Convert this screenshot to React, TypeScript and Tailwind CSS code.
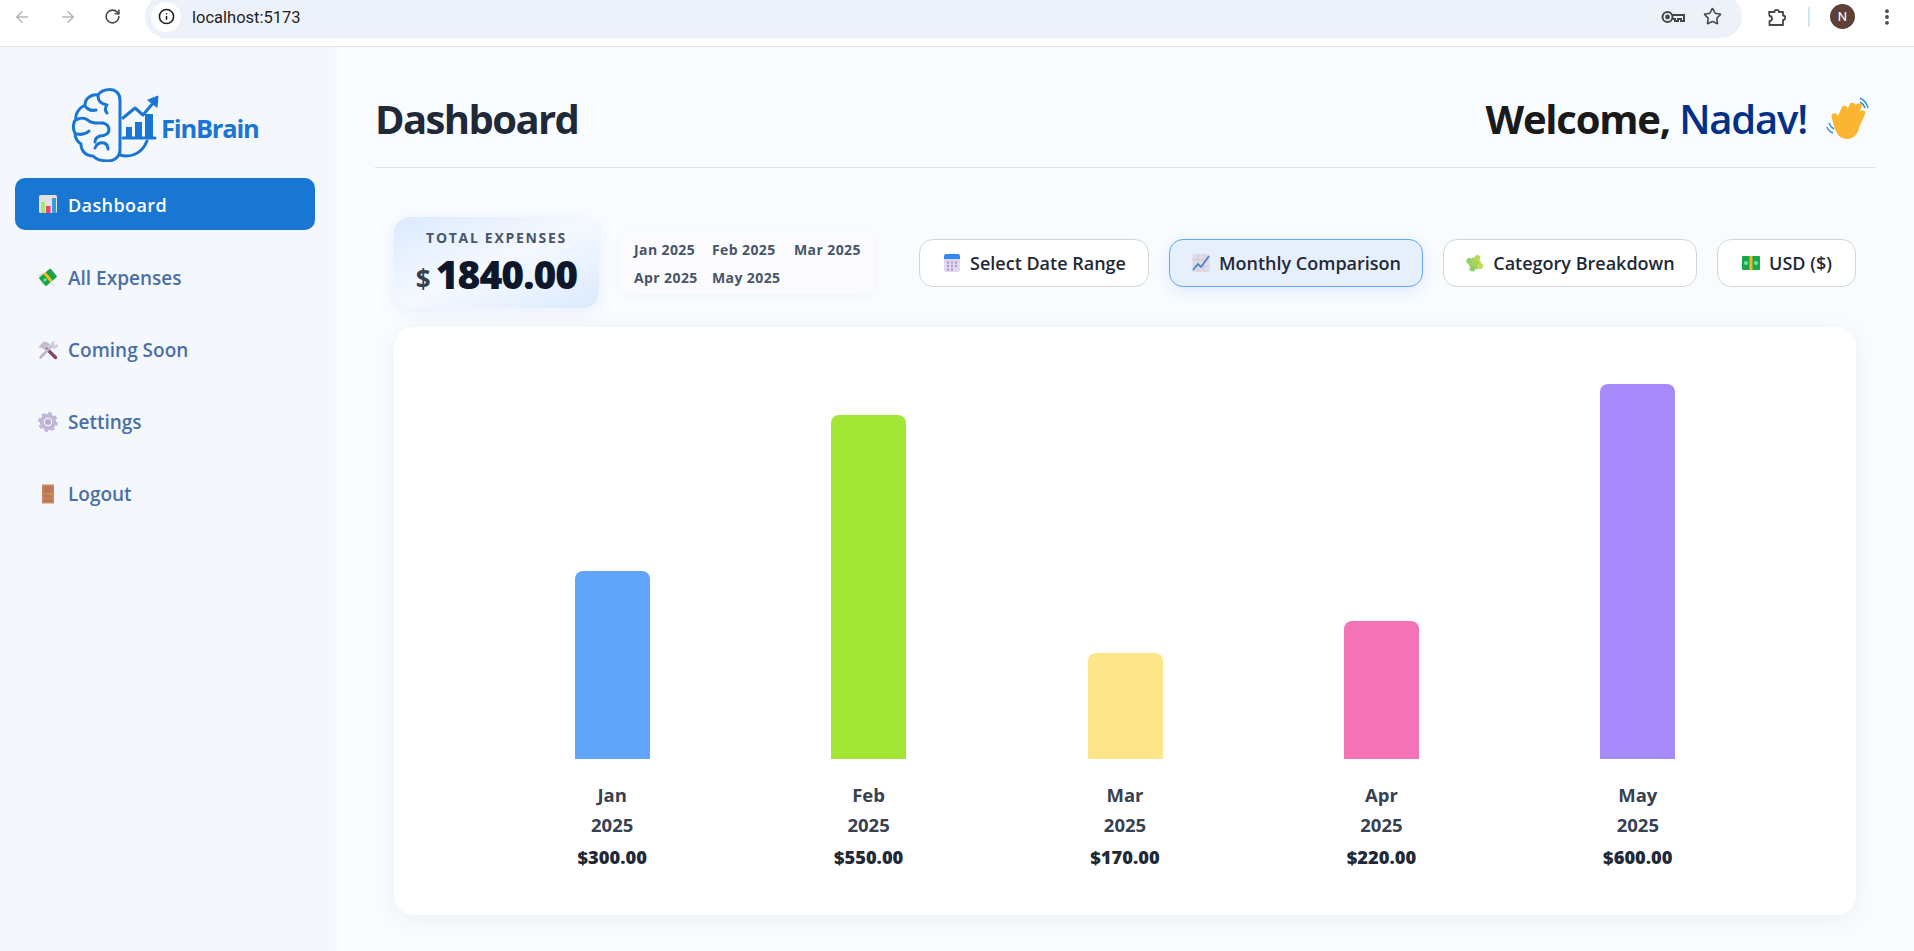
import type { ReactNode } from 'react';
import { ArrowLeft, ArrowRight, RotateCw, Star, EllipsisVertical, Info } from 'lucide-react';

const font = "font-['Open_Sans','Noto_Sans',sans-serif]";

function BrowserBar() {
  return (
    <div className="h-[47px] bg-white border-b border-[#e2e4e7] shrink-0 overflow-hidden font-['Roboto',sans-serif]">
      <div className="h-[33px] flex items-center pl-[13px]">
        <ArrowLeft className="w-[18px] h-[18px] text-[#b4b6b9]" strokeWidth={2} />
        <ArrowRight className="w-[18px] h-[18px] text-[#b4b6b9] ml-[28px]" strokeWidth={2} />
        <RotateCw className="w-[17px] h-[17px] text-[#474747] ml-[27px]" strokeWidth={2.2} />
        <div className="ml-[24px] w-[1597px] h-[43px] shrink-0 rounded-[21px] bg-[#edf2fa] flex items-center pl-[6px]">
          <div className="w-[30px] h-[30px] rounded-full bg-white flex items-center justify-center">
            <Info className="w-[17px] h-[17px] text-[#1f1f1f]" strokeWidth={2.2} />
          </div>
          <span className="ml-[11px] mt-[3px] text-[16.5px] text-[#1f1f1f]">localhost:5173</span>
          <svg width="24" height="14" viewBox="0 0 24 14" fill="none" stroke="#474747" strokeWidth="2" className="ml-auto">
            <circle cx="6.5" cy="7" r="5" />
            <circle cx="6.5" cy="7" r="1.4" fill="#474747" />
            <path d="M11.5 5H23v6h-3V9h-3v2h-3V9h-2.5" />
          </svg>
          <Star className="ml-[18px] mr-[20px] w-[19px] h-[19px] text-[#474747]" strokeWidth={2} />
        </div>
        <svg width="20" height="20" viewBox="0 0 20 20" fill="none" stroke="#474747" strokeWidth="1.8" strokeLinejoin="round" className="ml-[25px] shrink-0">
          <path d="M2 5h5.5a2.2 2.2 0 0 1 4.4 0H16v3.5a2.2 2.2 0 0 1 0 4.4V18H2.5v-4a2.5 2.5 0 0 0 0-5z" />
        </svg>
        <div className="ml-[21px] w-[2px] h-[20px] bg-[#d3e3fd] shrink-0" />
        <div className="ml-[20px] w-[25px] h-[25px] shrink-0 rounded-full bg-[#5d4037] text-white text-[13px] flex items-center justify-center">N</div>
        <EllipsisVertical className="ml-[22px] w-[20px] h-[20px] text-[#474747] shrink-0" strokeWidth={2.6} />
      </div>
    </div>
  );
}

function Logo() {
  return (
    <div className="flex items-start h-[74px] pl-[57px]">
      <svg width="90" height="74" viewBox="0 0 90 74" fill="none" stroke="#1976d2" strokeWidth="3" strokeLinecap="round" strokeLinejoin="round" className="shrink-0">
        <path d="M48 12C48 5 43 1.5 38 1.5C32 1.5 28 4 26 7C20 6 13 10 13 17C7 20 3 26 4 31C1 34 .5 41 3 45C3 50 6 54 9 56C9 63 14 68 21 68C24 71 30 73 36 73C43 73 48 68 48 62Z" />
        <path d="M26 8c0 5 4 8 9 9M35 17c-2 3-2 6 0 8M13 18c3 4 7 5 11 4M4 32c5-3 10-2 13 1 4 3 9 2 14 2M31 35c4 1 6 4 6 7 0 4-5 6-9 6M5 46c5 1 9 0 12-3M28 48c-3 1-5 3-5 6M23 60c1-4 5-6 9-5 3 1 4 3 4 6" />
        <path d="M48 67C58 70 70 66 75 53" />
        <path d="M51 30L63 20L71 27L82 14" />
        <path d="M76 12L86 8L85 19Z" fill="#1976d2" strokeWidth="1" />
        <path d="M51 50H83" />
        <path d="M54 49V39H60V49ZM63 49V34H70V49ZM73 49V26H81V49Z" fill="#1976d2" stroke="none" />
      </svg>
      <span className={`${font} text-[25.5px] leading-[30px] font-bold text-[#1976d2] tracking-[-1.2px] mt-[25px] -ml-[1px]`}>FinBrain</span>
    </div>
  );
}

// emoji drawn by hand, 20px box
const icons: Record<string, ReactNode> = {
  chart: (
    <>
      <rect x="1" y="1" width="18" height="18" rx="1.5" fill="#e3dfe9" />
      <rect x="3" y="8" width="4" height="11" fill="#a4e86a" />
      <rect x="8" y="12" width="4.5" height="7" fill="#ef3d78" />
      <rect x="14" y="4" width="4" height="15" fill="#3a9bdc" />
    </>
  ),
  money: (
    <>
      <path d="M0 7l5-2 3 9-3 4z" fill="#dfe3e6" />
      <path d="M12 16l4-1 1 4z" fill="#dfe3e6" />
      <g transform="rotate(-40 10 10)">
        <rect x="3" y="4" width="15" height="11" rx="1" fill="#16a34a" />
        <rect x="9" y="4" width="3" height="11" fill="#f5b921" />
        <circle cx="6.5" cy="9.5" r="1.6" fill="#6ee7a0" />
      </g>
    </>
  ),
  tools: (
    <>
      <path d="M9 9l8.5 8.5" stroke="#7f4560" strokeWidth="3.2" strokeLinecap="round" />
      <path d="M2.5 17.5L13 6.5" stroke="#c1b5cf" strokeWidth="2.6" strokeLinecap="round" />
      <path d="M0.5 7l5-5.5 4.5 1 2.5 3-3 1-2.5 3z" fill="#c4bdd0" />
      <path d="M13 6a3.5 3.5 0 0 1 4.5-4.5l-2 2 2 2 2.2-1.5A3.5 3.5 0 0 1 15 8.5z" fill="#d3cbdd" />
    </>
  ),
  gear: (
    <>
      <circle cx="10" cy="10" r="6.2" fill="none" stroke="#c4b6da" strokeWidth="4" />
      <circle cx="10" cy="10" r="8.3" fill="none" stroke="#c4b6da" strokeWidth="3.2" strokeDasharray="3.5 3" />
      <circle cx="10" cy="10" r="3" fill="#7d7396" fillOpacity="0.55" />
    </>
  ),
  door: (
    <>
      <rect x="4" y="0.5" width="12" height="19" rx="0.5" fill="#d1835a" />
      <rect x="5.5" y="2" width="9" height="7" fill="#b97a5c" />
      <rect x="5.5" y="10.5" width="9" height="3" fill="#b97a5c" />
      <rect x="5.5" y="15" width="9" height="3" fill="#b97a5c" />
      <rect x="12" y="9.5" width="3" height="1" fill="#f5a623" />
    </>
  ),
  calendar: (
    <>
      <rect x="2" y="1" width="16" height="18" rx="2.5" fill="#e3d6f0" />
      <path d="M2 6V3.5A2.5 2.5 0 0 1 4.5 1h11A2.5 2.5 0 0 1 18 3.5V6z" fill="#2f8af5" />
      <path d="M5 8.5h2v2H5zM9 8.5h2v2H9zM13 8.5h2v2h-2zM5 12h2v2H5zM9 12h2v2H9zM13 12h2v2h-2zM5 15.5h2v2H5zM9 15.5h2v2H9z" fill="#a99bc0" />
    </>
  ),
  trend: (
    <>
      <rect x="1.5" y="1" width="17" height="18" rx="1" fill="#e0dbe5" />
      <path d="M7 1v18M13 1v18M1.5 7h17M1.5 13h17" stroke="#cac2d2" strokeWidth="0.7" />
      <path d="M2 17l5-6 3 3 8-11" fill="none" stroke="#3d7fd0" strokeWidth="1.6" />
    </>
  ),
  puzzle: (
    <g transform="rotate(25 10 10)">
      <rect x="5" y="6" width="10" height="9" fill="#a5d65c" />
      <circle cx="10" cy="4.5" r="3" fill="#b6d95a" />
      <circle cx="16" cy="10.5" r="3" fill="#c9d957" />
      <circle cx="4" cy="10.5" r="3" fill="#93d268" />
      <circle cx="10" cy="16" r="3" fill="#8fcf72" />
    </g>
  ),
  cash: (
    <>
      <rect x="1" y="3" width="18" height="14" rx="1" fill="#1ca64c" />
      <rect x="8.5" y="3" width="3" height="14" fill="#f2b632" />
      <circle cx="5" cy="10" r="2" fill="#6ee7a0" />
      <circle cx="15" cy="10" r="2" fill="#6ee7a0" />
    </>
  ),
};

function Emoji({ name, size = 20 }: { name: string; size?: number }) {
  return (
    <svg width={size} height={size} viewBox="0 0 20 20" className="shrink-0">
      {icons[name]}
    </svg>
  );
}

const navItems = [
  { icon: 'money', label: 'All Expenses' },
  { icon: 'tools', label: 'Coming Soon' },
  { icon: 'gear', label: 'Settings' },
  { icon: 'door', label: 'Logout' },
];

function Sidebar() {
  return (
    <aside className={`${font} w-[335px] shrink-0 bg-[#f4f8fd] pt-[41px] pl-[15px] pr-[20px] shadow-[1px_0_2px_rgba(0,0,0,0.02)]`}>
      <Logo />
      <div className="mt-[16px] h-[52px] rounded-[10px] bg-[#1976d2] flex items-center gap-[10px] pl-[23px]">
        <Emoji name="chart" />
        <span className="text-white text-[18px] leading-[26px] font-semibold tracking-[0.4px] mt-[2px]">Dashboard</span>
      </div>
      <nav className="mt-[12px] flex flex-col">
        {navItems.map((item) => (
          <div key={item.label} className="h-[72px] flex items-center gap-[10px] pl-[23px]">
            <Emoji name={item.icon} />
            <span className="text-[#4a6fa5] text-[19px] font-semibold tracking-[0px]">{item.label}</span>
          </div>
        ))}
      </nav>
    </aside>
  );
}

const buttons = [
  { icon: 'calendar', label: 'Select Date Range', width: 'w-[230px]', active: false },
  { icon: 'trend', label: 'Monthly Comparison', width: 'w-[254px]', active: true },
  { icon: 'puzzle', label: 'Category Breakdown', width: 'w-[254px]', active: false },
  { icon: 'cash', label: 'USD ($)', width: 'w-[139px]', active: false },
];

const months = [
  { month: 'Jan', amount: 300, bar: 'bg-[#60a5fa]', height: 188 },
  { month: 'Feb', amount: 550, bar: 'bg-[#a3e635]', height: 344 },
  { month: 'Mar', amount: 170, bar: 'bg-[#fde68a]', height: 106 },
  { month: 'Apr', amount: 220, bar: 'bg-[#f472b6]', height: 138 },
  { month: 'May', amount: 600, bar: 'bg-[#a78bfa]', height: 375 },
];

function Chart() {
  return (
    <div className="mt-[19px] ml-[19px] w-[1462px] h-[588px] bg-white rounded-[20px] shadow-[0_4px_24px_rgba(0,0,0,0.05)] px-[90px] pt-[47px] flex">
      {months.map((m) => (
        <div key={m.month} className="flex-1 flex flex-col items-center">
          <div className="h-[385px] flex items-end">
            <div className={`w-[75px] rounded-t-[8px] ${m.bar}`} style={{ height: m.height }} />
          </div>
          <div className="mt-[21px] text-[18.5px] leading-[30px] font-bold text-[#374151] text-center">
            {m.month}
            <br />
            2025
          </div>
          <div className="mt-[5px] text-[18.3px] leading-[24px] font-extrabold text-[#1f2937]">
            ${m.amount}.00
          </div>
        </div>
      ))}
    </div>
  );
}

export default function App() {
  return (
    <div className="h-screen w-full overflow-hidden flex flex-col bg-[#f9fcff]">
      <BrowserBar />
      <div className="flex flex-1 min-h-0">
        <Sidebar />
        <main className={`${font} flex-1 pl-[40px] pr-[39px]`}>
          <header className="h-[121px] pt-[42px] border-b border-[#dde1e6] flex items-start justify-between pr-[5px]">
            <h1 className="text-[40px] leading-[60px] font-bold text-[#1f2937] tracking-[-1.6px]">Dashboard</h1>
            <div className="flex items-center text-[40px] leading-[60px] tracking-[-1.2px]">
              <span className="font-bold text-[#1a1a1a]">Welcome,&nbsp;</span>
              <span className="font-semibold text-[#003087]">Nadav!</span>
              <svg width="44" height="44" viewBox="0 0 44 44" className="ml-[19px]">
                <g transform="rotate(24 24 24)" fill="none" stroke="#fbb530" strokeWidth="6" strokeLinecap="round">
                  <path d="M14 28V15M20 24V9M26 24V7M32 26V12" />
                  <path d="M8 26l7 9" />
                </g>
                <ellipse cx="21" cy="29" rx="12" ry="13" fill="#fbb530" />
                <path d="M34 5c2 1 4 3 5 6M34 1c4 2 7 5 8 10M3 26c1 3 3 5 5 6M1 30c1 3 3 5 6 6" fill="none" stroke="#2f8fd8" strokeWidth="1.4" />
              </svg>
            </div>
          </header>

          <div className="ml-[19px] mt-[49px] flex items-center h-[91px]">
            <div className="w-[205px] h-[91px] rounded-[16px] bg-gradient-to-br from-[#dbeafe] via-[#f5f9ff] to-[#dbeafe] shadow-[0_4px_16px_rgba(37,99,235,0.08)] flex flex-col items-center pt-[12px]">
              <span className="text-[14px] leading-[18px] font-bold text-[#475569] tracking-[1.7px]">TOTAL EXPENSES</span>
              <div className="flex items-baseline mt-[5px] leading-[44px]">
                <span className="text-[26px] font-bold text-[#374151] mr-[5px]">$</span>
                <span className="text-[39px] font-extrabold text-[#0f172a] tracking-[-1px]">1840.00</span>
              </div>
            </div>
            <div className="ml-[21px] w-[255px] h-[65px] rounded-[10px] bg-[#fbfbfd] shadow-[0_2px_8px_rgba(0,0,0,0.03)] grid grid-cols-[78px_82px_1fr] grid-rows-[28px_28px] pl-[14px] pt-[6px] text-[14px] leading-[28px] font-bold text-[#475569] tracking-[0.4px] whitespace-nowrap">
              <span>Jan 2025</span>
              <span>Feb 2025</span>
              <span>Mar 2025</span>
              <span>Apr 2025</span>
              <span>May 2025</span>
            </div>
            <div className="ml-[44px] flex gap-[20px]">
              {buttons.map((b) => (
                <div
                  key={b.label}
                  className={`${b.width} h-[48px] rounded-[14px] border flex items-center justify-center gap-[8px] pt-[1px] text-[18px] font-semibold text-[#1f2937] whitespace-nowrap ${
                    b.active
                      ? 'bg-[#e6f0fd] border-[#60a5fa] shadow-[0_4px_16px_rgba(37,99,235,0.12)]'
                      : 'bg-white border-[#d1d5db]'
                  }`}
                >
                  <Emoji name={b.icon} />
                  {b.label}
                </div>
              ))}
            </div>
          </div>
          <Chart />
        </main>
      </div>
    </div>
  );
}
